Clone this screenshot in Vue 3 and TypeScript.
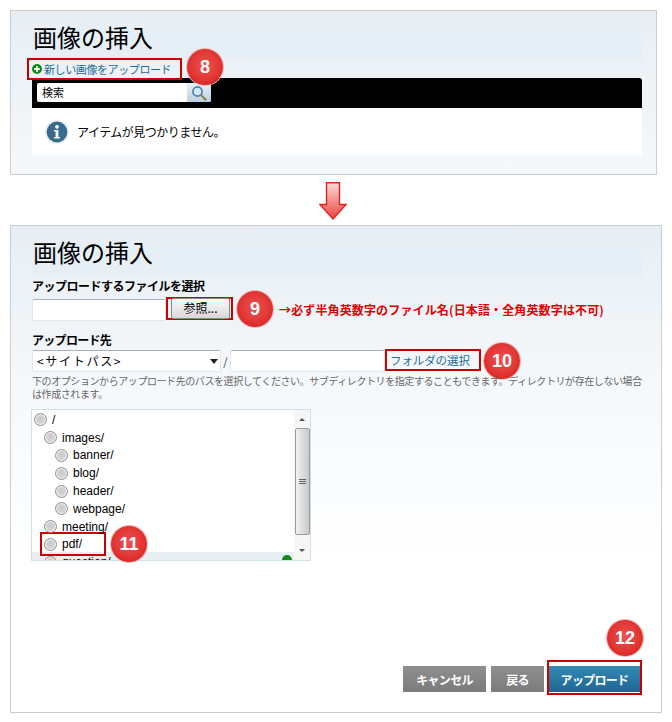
<script setup lang="ts">
interface Row { label: string; level: number }
const rows: Row[] = [
  { label: '/', level: 0 },
  { label: 'images/', level: 1 },
  { label: 'banner/', level: 2 },
  { label: 'blog/', level: 2 },
  { label: 'header/', level: 2 },
  { label: 'webpage/', level: 2 },
  { label: 'meeting/', level: 1 },
  { label: 'pdf/', level: 1 },
  { label: 'question/', level: 1 },
]
</script>

<template>
  <div class="page">
    <section class="panel panel-a">
      <h1 class="title">画像の挿入</h1>
      <div class="link-row">
        <a class="new-link"><svg class="plus" width="10" height="10" viewBox="0 0 10 10"><circle cx="5" cy="5" r="5" fill="#118a1e"/><path d="M5 2.2v5.6M2.2 5h5.6" stroke="#fff" stroke-width="1.8"/></svg>新しい画像をアップロード</a>
        <span class="badge badge-8">8</span>
      </div>
      <div class="toolbar">
        <div class="search">
          <span class="search-text">検索</span>
          <span class="search-btn">
            <svg width="16" height="16" viewBox="0 0 16 16"><circle cx="6.500" cy="6.500" r="4.600" fill="#d5e6f4" stroke="#3f7fb5" stroke-width="1.600"/><path d="M10 10l4.500 4.500" stroke="#9a7b52" stroke-width="2.200" stroke-linecap="round"/></svg>
          </span>
        </div>
      </div>
      <div class="message">
        <svg class="info" width="24" height="24" viewBox="0 0 24 24"><circle cx="12" cy="12" r="12" fill="#e9eff4"/><circle cx="12" cy="12" r="10.400" fill="#386b8d"/><circle cx="12" cy="6.800" r="1.900" fill="#fff"/><path d="M9 10h4.400v7H15v1.600H9V17h1.600v-5.400H9z" fill="#fff"/></svg>
        <span>アイテムが見つかりません。</span>
      </div>
    </section>

    <div class="arrow-row">
      <svg width="28" height="38" viewBox="0 0 28 38">
        <defs><linearGradient id="arrowFill" x1="0" y1="0" x2="0" y2="1"><stop offset="0" stop-color="#fcdcd8"/><stop offset="1" stop-color="#e8443f"/></linearGradient></defs>
        <path d="M7.500 0.800h13v21.700h6.500L14 37 1 22.500h6.500z" fill="url(#arrowFill)" stroke="#e32420" stroke-width="1.400"/>
      </svg>
    </div>

    <section class="panel panel-b">
      <h1 class="title">画像の挿入</h1>
      <div class="label label-file">アップロードするファイルを選択</div>
      <div class="file-row">
        <span class="field field-file"></span>
        <span class="mark mark-browse"><span class="browse">参照...</span></span>
        <span class="badge badge-flow">9</span>
        <span class="warn">→必ず半角英数字のファイル名(日本語・全角英数字は不可)</span>
      </div>
      <div class="label label-dest">アップロード先</div>
      <div class="dest-row">
        <span class="field field-select">&lt;サイトパス&gt;<i class="caret"></i></span>
        <span class="slash">/</span>
        <span class="field field-path"></span>
        <span class="mark mark-folder"><a class="folder-link">フォルダの選択</a></span>
        <span class="badge badge-flow badge-10">10</span>
      </div>
      <p class="help">下のオプションからアップロード先のパスを選択してください。サブディレクトリを指定することもできます。ディレクトリが存在しない場合は作成されます。</p>

      <div class="tree">
        <div class="tree-list">
          <div v-for="row in rows" :key="row.label" class="tree-row" :class="'lv' + row.level">
            <i class="radio"></i><span>{{ row.label }}</span>
          </div>
          <div class="tree-foot"><svg width="10" height="10" viewBox="0 0 10 10"><circle cx="5" cy="5" r="5" fill="#118a1e"/></svg></div>
        </div>
        <div class="scroll">
          <i class="scroll-up"></i>
          <div class="thumb"><i></i><i></i><i></i></div>
          <i class="scroll-down"></i>
        </div>
        <i class="tree-mark"></i>
        <span class="badge badge-11">11</span>
      </div>

      <div class="actions">
        <span class="badge badge-12">12</span>
        <button class="btn">キャンセル</button>
        <button class="btn">戻る</button>
        <span class="mark mark-upload"><button class="btn btn-primary">アップロード</button></span>
      </div>
    </section>
  </div>
</template>

<style scoped>
.page {
  width: 672px;
  height: 722px;
  box-sizing: border-box;
  padding: 10px 0 0 10px;
  font-family: "Noto Sans CJK JP", "Liberation Sans", sans-serif;
  color: #000;
  background: #fff;
  overflow: hidden;
}
.panel {
  box-sizing: border-box;
  border: 1px solid #cbcdcf;
  background: linear-gradient(#e7eef3 0, #f6f9fc 170px, #ffffff 340px);
  padding: 16px 0 0 21px;
}
.panel-a { width: 647px; height: 165px; }
.panel-b { width: 652px; height: 488px; position: relative; }
.title {
  box-sizing: border-box;
  width: 610px;
  height: 35px;
  margin: 0;
  padding-left: 1px;
  font-size: 24px;
  line-height: 20px;
  font-weight: 400;
  background: #e6eef6;
}
.link-row { position: relative; height: 16px; }
.new-link {
  position: absolute;
  left: -5px;
  top: -4px;
  display: flex;
  align-items: center;
  box-sizing: border-box;
  width: 155px;
  height: 22px;
  padding-left: 3px;
  border: 2px solid #cc0000;
  font-size: 11px;
  letter-spacing: -0.4px;
  color: #1f6d98;
  white-space: nowrap;
}
.plus { margin-right: 2px; flex: none; }
.toolbar {
  box-sizing: border-box;
  width: 610px;
  height: 30px;
  padding: 5px 0 0 5px;
  background: #000;
  border-top-right-radius: 3px;
}
.search {
  display: flex;
  width: 174px;
  height: 19px;
  background: #fff;
  border-radius: 2px;
  overflow: hidden;
}
.search-text {
  flex: 1;
  padding-left: 5px;
  font-size: 11px;
  line-height: 19px;
}
.search-btn {
  width: 24px;
  display: flex;
  align-items: center;
  justify-content: center;
  background: linear-gradient(#e8f0f6, #bcd0e0);
}
.message {
  box-sizing: border-box;
  display: flex;
  align-items: center;
  gap: 8px;
  width: 610px;
  height: 47px;
  padding-left: 13px;
  background: #fff;
  font-size: 12px;
  letter-spacing: -0.5px;
}
.info { flex: none; }
.arrow-row {
  height: 50px;
  width: 646px;
  display: flex;
  justify-content: center;
  align-items: flex-start;
  padding-top: 7px;
  box-sizing: border-box;
}
.label {
  font-size: 12px;
  font-weight: 700;
  line-height: 18px;
  white-space: nowrap;
}
.label-file { letter-spacing: -0.5px; }
.label-dest { margin-top: 10px; letter-spacing: -0.7px; }
.file-row {
  display: flex;
  align-items: center;
  height: 24px;
  margin-top: 2px;
  white-space: nowrap;
}
.field {
  box-sizing: border-box;
  display: block;
  height: 22px;
  background: #fff;
  border: 1px solid #e2e7ec;
  border-top-color: #aab0b6;
  border-radius: 2px;
}
.field-file { width: 134px; margin-top: 2px; }
.mark { box-sizing: border-box; border: 2px solid #cc0000; display: flex; align-items: center; }
.mark-browse { width: 67px; height: 23px; padding-left: 3px; align-self: flex-start; }
.browse {
  box-sizing: border-box;
  width: 59px;
  height: 21px;
  background: linear-gradient(#fafafa, #d8d8d8);
  border: 1px solid #8a8a8a;
  border-radius: 2px;
  text-align: center;
  font-size: 12px;
  line-height: 18px;
}
.badge {
  box-sizing: border-box;
  width: 36px;
  height: 36px;
  border-radius: 50%;
  display: flex;
  align-items: center;
  justify-content: center;
  font-family: "Liberation Sans", sans-serif;
  font-weight: 700;
  font-size: 18px;
  color: #fff;
  background: radial-gradient(circle at 50% 45%, #ea5250 0, #e23634 55%, #cf1413 100%);
  box-shadow: 0 0 0 1px #f1b5b3;
}
.badge-flow { flex: none; margin-left: 4px; }
.badge-10 { margin-left: 3px; }
.warn {
  margin-left: 6px;
  color: #e00000;
  font-size: 12px;
  font-weight: 700;
  letter-spacing: 0.14px;
}
.dest-row {
  display: flex;
  align-items: center;
  height: 22px;
  margin-top: 1px;
  white-space: nowrap;
}
.field-select {
  position: relative;
  width: 189px;
  padding-left: 4px;
  font-size: 12px;
  line-height: 20px;
  letter-spacing: 1.700px;
}
.caret {
  position: absolute;
  right: 2px;
  top: 8px;
  border-left: 4px solid transparent;
  border-right: 4px solid transparent;
  border-top: 5px solid #222;
}
.slash {
  width: 9px;
  text-align: center;
  font-size: 11px;
  color: #345;
}
.field-path { width: 155px; }
.mark-folder { width: 96px; height: 22px; padding-left: 3px; margin-top: -2px; }
.folder-link { font-size: 11.500px; color: #1f6d98; letter-spacing: -0.1px; }
.help {
  margin: 2px 0 0;
  width: 610px;
  font-size: 10px;
  line-height: 13px;
  color: #666;
  letter-spacing: -0.42px;
}
.tree {
  position: relative;
  box-sizing: border-box;
  display: flex;
  width: 280px;
  height: 152px;
  margin: 9px 0 0 -1px;
  background: #fff;
  border: 1px solid #cfe0e6;
}
.tree-list {
  position: relative;
  flex: 1;
  overflow: hidden;
  padding-top: 1px;
  font-family: "Liberation Sans", sans-serif;
  font-size: 12px;
}
.tree-row {
  position: relative;
  z-index: 1;
  display: flex;
  align-items: center;
  height: 17.800px;
  white-space: nowrap;
}
.lv0 { padding-left: 2px; }
.lv1 { padding-left: 12px; }
.lv2 { padding-left: 23px; }
.radio {
  flex: none;
  box-sizing: border-box;
  width: 13px;
  height: 13px;
  margin-right: 5px;
  border-radius: 50%;
  border: 1px solid #909090;
  box-shadow: inset 0 0 0 1px #f0f0f0;
  background: radial-gradient(circle at 50% 40%, #c9c9c9 0, #d6d6d6 60%, #f4f4f4 100%);
}
.tree-mark {
  position: absolute;
  left: 8px;
  top: 122px;
  width: 66px;
  height: 24px;
  box-sizing: border-box;
  border: 2px solid #cc0000;
}
.tree-foot {
  position: absolute;
  left: 0;
  right: 0;
  bottom: 0;
  height: 8px;
  background: #e8eff3;
  overflow: hidden;
  display: flex;
  justify-content: flex-end;
}
.tree-foot svg { margin-top: 3px; margin-right: 2px; flex: none; }
.scroll {
  flex: none;
  width: 16px;
  display: flex;
  flex-direction: column;
  align-items: center;
  background: #f6f6f6;
}
.scroll-up, .scroll-down {
  flex: none;
  height: 0;
  width: 0;
  display: block;
  border-left: 3px solid transparent;
  border-right: 3px solid transparent;
}
.scroll-up { border-bottom: 3px solid #555; margin: 8px 0 7px; }
.scroll-down { border-top: 3px solid #555; margin: 14px 0 0; }
.thumb {
  box-sizing: border-box;
  width: 15px;
  height: 107px;
  display: flex;
  flex-direction: column;
  align-items: center;
  justify-content: center;
  gap: 1px;
  background: linear-gradient(90deg, #f2f2f2, #c9c9c9);
  border: 1px solid #9b9b9b;
  border-radius: 2px;
}
.thumb i { display: block; width: 7px; height: 1px; background: #666; }
.actions {
  position: absolute;
  left: 392px;
  top: 434px;
  display: flex;
  align-items: flex-end;
  gap: 5px;
}
.btn {
  height: 26px;
  padding: 0;
  border: 0;
  width: 83px;
  margin-bottom: 3px;
  font-family: inherit;
  font-weight: 700;
  font-size: 12px;
  letter-spacing: -0.7px;
  color: #fff;
  background: linear-gradient(#8f8f8f, #7b7b7b);
}
.btn + .btn { width: 53px; }
.mark-upload {
  box-sizing: border-box;
  width: 95px;
  height: 35px;
  align-items: flex-end;
  padding-bottom: 1px;
  margin-left: -2px;
}
.btn-primary { width: 91px; margin-bottom: 0; background: linear-gradient(#3489b3, #1f6694); }
.badge-8 { position: absolute; left: 155px; top: -13px; }
.badge-11 { position: absolute; left: 79px; top: 116px; z-index: 2; }
.badge-12 { position: absolute; left: 204px; top: -40px; }
</style>

<style>
html, body { margin: 0; background: #fff; }
</style>
